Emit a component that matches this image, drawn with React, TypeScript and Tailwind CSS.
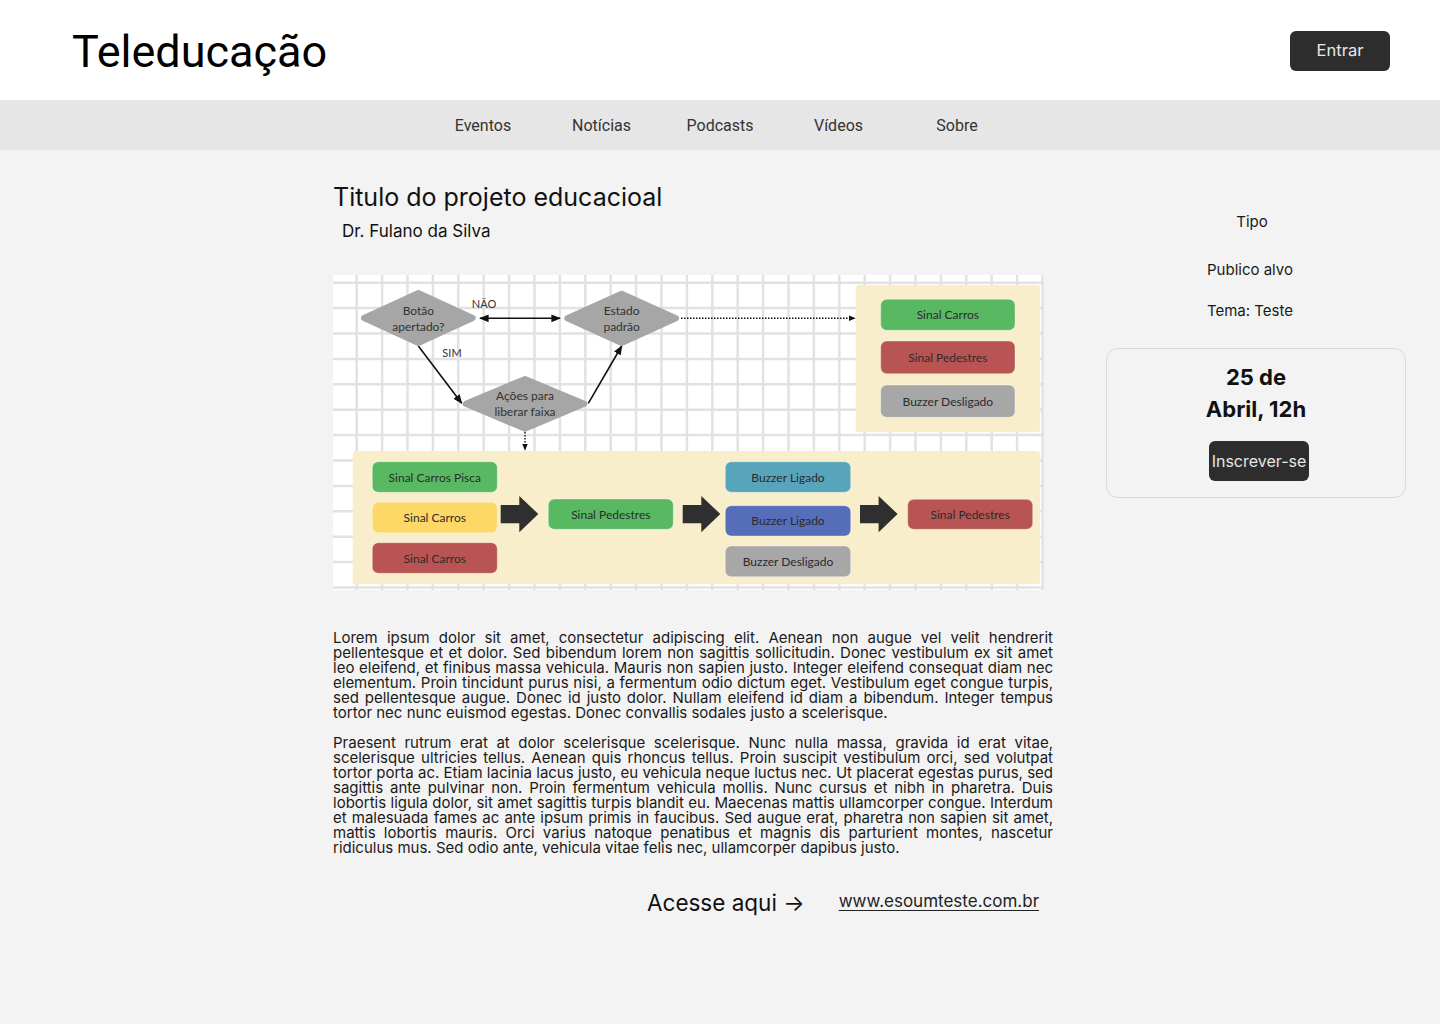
// Teleducação — project detail page.
// Static mock: header, nav strip, article column with a flow diagram, and a
// sidebar with event info.

const navItems = ["Eventos", "Notícias", "Podcasts", "Vídeos", "Sobre"];

const GREEN = "#59b963";
const RED = "#b85554";
const GRAY = "#a7a7a7";

type Box = { x: number; y: number; w: number; h: number; fill: string; label: string };

const boxes: Box[] = [
  // top-right panel
  { x: 547.7, y: 24.3, w: 134.3, h: 31, fill: GREEN, label: "Sinal Carros" },
  { x: 547.7, y: 66, w: 134.3, h: 32.7, fill: RED, label: "Sinal Pedestres" },
  { x: 547.7, y: 110, w: 134.3, h: 32.3, fill: GRAY, label: "Buzzer Desligado" },
  // bottom panel
  { x: 39.3, y: 186.7, w: 125, h: 30.6, fill: GREEN, label: "Sinal Carros Pisca" },
  { x: 39.3, y: 227.3, w: 125, h: 30.4, fill: "#fdd866", label: "Sinal Carros" },
  { x: 39.3, y: 267.7, w: 125, h: 30.6, fill: RED, label: "Sinal Carros" },
  { x: 215.3, y: 224, w: 125, h: 30.3, fill: GREEN, label: "Sinal Pedestres" },
  { x: 392.3, y: 186.7, w: 125.4, h: 30.6, fill: "#58a4ba", label: "Buzzer Ligado" },
  { x: 392.3, y: 230.7, w: 125.4, h: 30.3, fill: "#566eb9", label: "Buzzer Ligado" },
  { x: 392.3, y: 271, w: 125.4, h: 30.7, fill: GRAY, label: "Buzzer Desligado" },
  { x: 574.7, y: 224.3, w: 125, h: 30, fill: RED, label: "Sinal Pedestres" },
];

const diamonds = [
  { l: 27, r: 143.7, t: 15, b: 71, lines: ["Botão", "apertado?"] },
  { l: 230.3, r: 347, t: 15.7, b: 71, lines: ["Estado", "padrão"] },
  { l: 128.7, r: 255.3, t: 101, b: 156.7, lines: ["Ações para", "liberar faixa"] },
];

function blockArrow(x0: number) {
  return `M${x0} 230 H${x0 + 18.6} V221 L${x0 + 37.6} 239 L${x0 + 18.6} 257.3 V248.3 H${x0} Z`;
}

function FlowDiagram() {
  const font = "Lato, 'Noto Sans', sans-serif";
  return (
    <svg width={711} height={315} viewBox="0 0 711 315" className="block">
      <defs>
        <marker id="ah" viewBox="0 0 10 10" refX="9" refY="5" markerWidth="6" markerHeight="6" orient="auto-start-reverse">
          <path d="M0 1 L10 5 L0 9 Z" fill="#111" />
        </marker>
        <marker id="ahs" viewBox="0 0 10 10" refX="9" refY="5" markerWidth="5" markerHeight="5" orient="auto">
          <path d="M0 1 L10 5 L0 9 Z" fill="#111" />
        </marker>
      </defs>
      <rect width={711} height={315} fill="#ffffff" />
      {Array.from({ length: 29 }, (_, k) => (
        <line key={`v${k}`} x1={-1.7 + 25.4 * k} y1={0} x2={-1.7 + 25.4 * k} y2={315} stroke="#e2e2e2" strokeWidth={2.5} />
      ))}
      {Array.from({ length: 13 }, (_, k) => (
        <line key={`h${k}`} x1={0} y1={7.7 + 25.4 * k} x2={711} y2={7.7 + 25.4 * k} stroke="#e2e2e2" strokeWidth={2.5} />
      ))}

      {/* panels */}
      <rect x={522.7} y={10} width={184.3} height={147.3} rx={3} fill="#f8eecb" />
      <rect x={19.7} y={176} width={687.3} height={133.3} rx={3} fill="#f8eecb" />

      {/* connectors */}
      <line x1={147} y1={43.3} x2={227} y2={43.3} stroke="#111" strokeWidth={1.6} markerStart="url(#ah)" markerEnd="url(#ah)" />
      <line x1={85.3} y1={71} x2={128.7} y2={128.3} stroke="#111" strokeWidth={1.6} markerEnd="url(#ah)" />
      <line x1={255.3} y1={128.3} x2={288.7} y2={71} stroke="#111" strokeWidth={1.6} markerEnd="url(#ah)" />
      <line x1={348} y1={43.3} x2={522} y2={43.3} stroke="#111" strokeWidth={1.4} strokeDasharray="1.5 1.5" markerEnd="url(#ahs)" />
      <line x1={192} y1={157} x2={192} y2={175} stroke="#111" strokeWidth={1.4} strokeDasharray="1.5 1.5" markerEnd="url(#ahs)" />
      <text x={151} y={28.3} fontFamily={font} fontSize={11} fill="#333" textAnchor="middle" dominantBaseline="central">NÃO</text>
      <text x={119} y={77.7} fontFamily={font} fontSize={11} fill="#333" textAnchor="middle" dominantBaseline="central">SIM</text>

      {/* decisions */}
      {diamonds.map((d, i) => {
        const cx = (d.l + d.r) / 2;
        const cy = (d.t + d.b) / 2;
        const pts = `${d.l + 4},${cy} ${cx},${d.t + 3} ${d.r - 4},${cy} ${cx},${d.b - 3}`;
        return (
          <g key={i}>
            <polygon points={pts} fill="#a6a6a6" stroke="#a6a6a6" strokeWidth={6} strokeLinejoin="round" />
            <text x={cx} y={cy - 8} fontFamily={font} fontSize={12} fill="#333" textAnchor="middle" dominantBaseline="central">{d.lines[0]}</text>
            <text x={cx} y={cy + 8} fontFamily={font} fontSize={12} fill="#333" textAnchor="middle" dominantBaseline="central">{d.lines[1]}</text>
          </g>
        );
      })}

      {/* state boxes */}
      {boxes.map((b, i) => (
        <g key={i}>
          <rect x={b.x} y={b.y} width={b.w} height={b.h} rx={6} fill={b.fill} stroke="#ffffff" strokeOpacity={0.35} strokeWidth={1} />
          <text x={b.x + b.w / 2} y={b.y + b.h / 2} fontFamily={font} fontSize={12} fill="#2b2b2b" textAnchor="middle" dominantBaseline="central">{b.label}</text>
        </g>
      ))}

      {/* big arrows */}
      <path d={blockArrow(167.7)} fill="#2f2f2f" />
      <path d={blockArrow(349.7)} fill="#2f2f2f" />
      <path d={blockArrow(527)} fill="#2f2f2f" />
    </svg>
  );
}

export default function App() {
  return (
    <div className="min-h-screen bg-[#f3f3f3] font-[family-name:Inter,sans-serif] text-[#111]">
      {/* Header */}
      <header className="flex h-[100px] items-center justify-between bg-white pl-[72px] pr-[50px]">
        <h1 className="mt-[2px] font-[family-name:Roboto,sans-serif] text-[45px] font-normal leading-none text-black">
          Teleducação
        </h1>
        <button className="mt-[1px] h-10 w-[100px] rounded-md bg-[#2d2d2d] text-[16.5px] text-[#e8e8e8]">
          Entrar
        </button>
      </header>

      {/* Nav */}
      <nav className="flex h-[50px] items-center justify-center bg-[#e6e6e6] pt-[2px] font-[family-name:Roboto,sans-serif] text-[16px] text-[#333]">
        {navItems.map((n) => (
          <a key={n} className="w-[118.5px] text-center">
            {n}
          </a>
        ))}
      </nav>

      <main className="flex pt-[31px]">
        {/* Article column */}
        <article className="ml-[333px] w-[720px]">
          <h2 className="text-[25px] leading-8 font-normal text-[#111]">Titulo do projeto educacioal</h2>
          <p className="ml-[9px] mt-[6px] text-[17px] leading-6 text-[#111]">Dr. Fulano da Silva</p>

          <div className="mt-8">
            <FlowDiagram />
          </div>

          <div className="mt-10 flex flex-col gap-[15px] text-justify text-[15px] leading-[15px] text-[#1a1a1a]">
            <p>
              Lorem ipsum dolor sit amet, consectetur adipiscing elit. Aenean non augue vel velit hendrerit
              pellentesque et et dolor. Sed bibendum lorem non sagittis sollicitudin. Donec vestibulum ex sit amet
              leo eleifend, et finibus massa vehicula. Mauris non sapien justo. Integer eleifend consequat diam nec
              elementum. Proin tincidunt purus nisi, a fermentum odio dictum eget. Vestibulum eget congue turpis,
              sed pellentesque augue. Donec id justo dolor. Nullam eleifend id diam a bibendum. Integer tempus
              tortor nec nunc euismod egestas. Donec convallis sodales justo a scelerisque.
            </p>
            <p>
              Praesent rutrum erat at dolor scelerisque scelerisque. Nunc nulla massa, gravida id erat vitae,
              scelerisque ultricies tellus. Aenean quis rhoncus tellus. Proin suscipit vestibulum orci, sed volutpat
              tortor porta ac. Etiam lacinia lacus justo, eu vehicula neque luctus nec. Ut placerat egestas purus, sed
              sagittis ante pulvinar non. Proin fermentum vehicula mollis. Nunc cursus et nibh in pharetra. Duis
              lobortis ligula dolor, sit amet sagittis turpis blandit eu. Maecenas mattis ullamcorper congue. Interdum
              et malesuada fames ac ante ipsum primis in faucibus. Sed augue erat, pharetra non sapien sit amet,
              mattis lobortis mauris. Orci varius natoque penatibus et magnis dis parturient montes, nascetur
              ridiculus mus. Sed odio ante, vehicula vitae felis nec, ullamcorper dapibus justo.
            </p>
          </div>

          <div className="ml-[314px] mt-[34px] flex items-center gap-[34px]">
            <span className="text-[22.5px] leading-7 text-[#111]">Acesse aqui →</span>
            <a className="-mt-[4px] text-[17px] leading-6 text-[#222] underline underline-offset-[3px]">www.esoumteste.com.br</a>
          </div>
        </article>

        {/* Sidebar */}
        <aside className="ml-[53px] flex w-[300px] flex-col items-center pt-[31px] text-[15px] leading-5 text-[#1a1a1a]">
          <p className="-ml-[8px]">Tipo</p>
          <p className="mt-7 -ml-[12px]">Publico alvo</p>
          <p className="mt-[21px] -ml-[12px]">Tema: Teste</p>
          <div className="mt-[27px] flex w-[300px] flex-col items-center rounded-xl border border-[#dadada] pb-4 pt-[13px]">
            <p className="text-center text-[22px] font-bold leading-[31.5px] text-[#111]">
              25 de
              <br />
              Abril, 12h
            </p>
            <button className="ml-[6px] mt-4 h-10 w-[100px] whitespace-nowrap rounded-md bg-[#2d2d2d] px-0 text-[16px] text-[#e6e6e6]">
              Inscrever-se
            </button>
          </div>
        </aside>
      </main>
    </div>
  );
}
